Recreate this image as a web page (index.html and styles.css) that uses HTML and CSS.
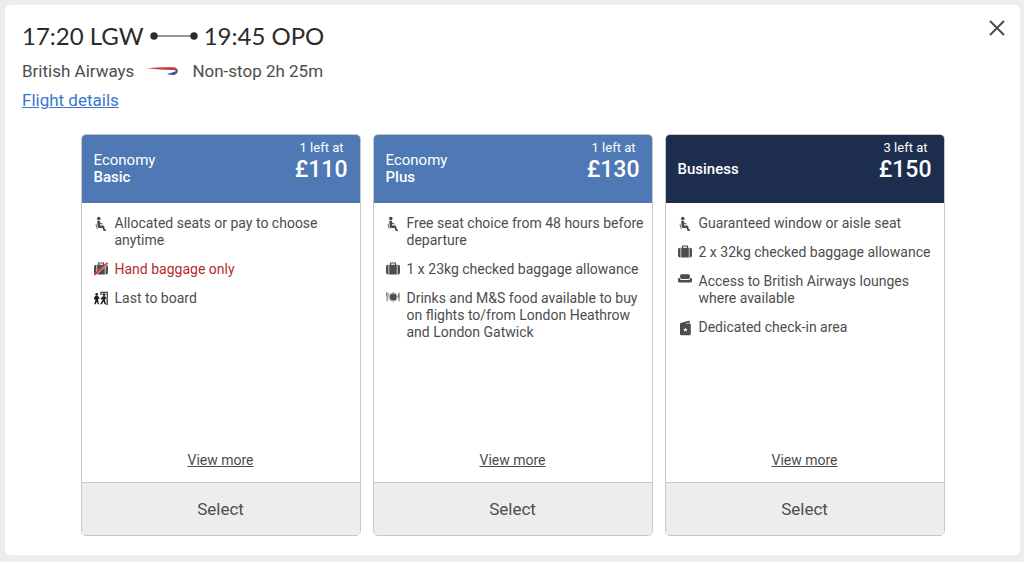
FILE: index.html
```html
<!DOCTYPE html>
<html lang="en">
<head>
<meta charset="utf-8">
<meta name="viewport" content="width=device-width, initial-scale=1">
<title>Flight fares</title>
<link rel="stylesheet" href="styles.css">
</head>
<body>
<svg class="sprite" aria-hidden="true">
  <symbol id="seat" viewBox="0 0 14 16"><circle cx="4.8" cy="2.6" r="1.8"/><path d="M3.2 6Q3.2 4.7 4.7 4.7T6.2 6V9.4H8.8Q10 9.4 10.3 10.7L10.9 13.6H12V15.1H9.6L8.6 12H5.5Q3.8 12 3.6 10.4Z"/><path d="M5.5 7.2L8.6 8" stroke="currentColor"/><path d="M2 7.8L2.6 11.4Q2.8 12.4 3.8 12.5" fill="none" stroke="currentColor" stroke-width=".8"/></symbol>
  <symbol id="case" viewBox="0 0 14 16"><path d="M4.5 3.3V1H9.5V3.3" fill="none" stroke="currentColor" stroke-width="1.1"/><path d="M2 2.8H2.5V12.5H2Q0 12.5 0 10.5V4.8Q0 2.8 2 2.8ZM3.2 2.8H10.8V12.5H3.2ZM11.5 2.8H12Q14 2.8 14 4.8V10.5Q14 12.5 12 12.5H11.5Z"/></symbol>
  <symbol id="nocase" viewBox="0 0 14 16"><use href="#case" width="14" height="16"/><path d="M.9 12.8L13.8 1" stroke="#fff" stroke-width="2"/><path d="M.5 12.8L13.5 .8" stroke="#d12f2c" stroke-width="1.7"/></symbol>
  <symbol id="board" viewBox="0 0 14 16"><g color="#1c1c1c" fill="#1c1c1c"><path d="M7 4V1.2H13.2V13.2H12" fill="none" stroke="currentColor" stroke-width="1.1"/><circle cx="2.7" cy="3.4" r="1.4"/><path d="M1.4 5.1H4L5.6 7.4L5 8.2L4.1 7.7V9.2L5 13.3H3.6L2.8 10.4L1.7 13.3H.3L1.4 9V8.2L.1 8.6V6.5Z"/><circle cx="10" cy="3.6" r="1.4"/><path d="M8.7 5.3H11.2L12.4 7.7L11.6 8.2L11 7.6V9.2L12.1 13.3H10.6L9.6 10.3L7.8 13.3H6.1L8.4 9.3V7.4L7.2 8.7L6.5 7.8Z"/></g></symbol>
  <symbol id="meal" viewBox="0 0 14 16"><circle cx="7.2" cy="6" r="3.5"/><circle cx="7.2" cy="6" r="4.3" fill="none" stroke="currentColor" stroke-width=".4"/><path d="M.5 1.5V4.3Q.5 5 1.2 5V10.3M2 1.5V4.3Q2 5 1.3 5" fill="none" stroke="currentColor" stroke-width=".8"/><path d="M13.5 1.2V10.3H12.7V6.5H12.2Q12 2 13.5 1.2Z"/></symbol>
  <symbol id="sofa" viewBox="0 0 14 16"><path d="M2 3.3V2Q2 .3 3.5 .3H10.5Q12 .3 12 2V3.3Q11 3.7 11 5.1H3Q3 3.7 2 3.3ZM0 5.3Q0 4 1.3 4T2.4 5.3V5.9H11.6V5.3Q11.6 4 12.7 4T14 5.3V7.3Q14 8.4 12.7 8.4H1.3Q0 8.4 0 7.3Z"/></symbol>
  <symbol id="pass" viewBox="0 0 14 16"><path d="M2.5 3L10.7 .7Q11.7 .5 11.7 1.5V3.7H12Q12.8 3.7 12.8 4.5V14Q12.8 15.2 11.6 15.2H3.2Q2 15.2 2 14V4Q2 3.3 2.5 3ZM7 3.7H10.8V2.8Z" fill-rule="evenodd"/><path d="M7.4 7.4L8 9H9.8L8.4 10L8.9 11.7L7.4 10.7L5.9 11.7L6.4 10L5 9H6.8Z" fill="#fff"/></symbol>
</svg>
<main class="panel">
  <header class="flight">
    <div class="flight-info">
      <h1 class="route"><span>17:20 LGW</span>
        <svg class="route-line" viewBox="0 0 48 8" aria-hidden="true"><path d="M4 4H44" stroke="#2b2b2b"/><circle cx="4" cy="4" r="3.7"/><circle cx="44" cy="4" r="3.7"/></svg>
        <span>19:45 OPO</span></h1>
      <p class="airline"><span>British Airways</span>
        <svg class="ribbon" viewBox="0 0 32 12" aria-hidden="true"><path d="M0 3.3Q15 1.8 26 2.3Q31 2.5 30.8 6.5L29 6Q28.5 5 26 5Q13 5 0 3.3Z" fill="#cf3434"/><path d="M20 8.8Q25 8 30.8 5.6Q31 9 27 10Q23.5 10.4 20 8.8Z" fill="#3158a6"/></svg>
        <span>Non-stop 2h 25m</span></p>
      <a class="details" href="#">Flight details</a>
    </div>
    <button class="close" type="button" aria-label="Close"><svg viewBox="0 0 16 16"><path d="M1 1L15 15M15 1L1 15" stroke="currentColor" stroke-width="2"/></svg></button>
  </header>
  <section class="fares">
    <article class="fare">
      <header class="fare-head"><h2 class="fare-name"><span>Economy</span><strong>Basic</strong></h2><p class="fare-price"><span class="left">1 left at</span><span class="amount">£110</span></p></header>
      <ul class="perks">
        <li><svg class="icon"><use href="#seat"/></svg><span>Allocated seats or pay to choose anytime</span></li>
        <li><svg class="icon"><use href="#nocase"/></svg><span class="warn">Hand baggage only</span></li>
        <li><svg class="icon"><use href="#board"/></svg><span>Last to board</span></li>
      </ul>
      <a class="more" href="#">View more</a>
      <button class="select" type="button">Select</button>
    </article>
    <article class="fare">
      <header class="fare-head"><h2 class="fare-name"><span>Economy</span><strong>Plus</strong></h2><p class="fare-price"><span class="left">1 left at</span><span class="amount">£130</span></p></header>
      <ul class="perks">
        <li><svg class="icon"><use href="#seat"/></svg><span>Free seat choice from 48 hours before departure</span></li>
        <li><svg class="icon"><use href="#case"/></svg><span>1 x 23kg checked baggage allowance</span></li>
        <li><svg class="icon"><use href="#meal"/></svg><span>Drinks and M&amp;S food available to buy on flights to/from London Heathrow and London Gatwick</span></li>
      </ul>
      <a class="more" href="#">View more</a>
      <button class="select" type="button">Select</button>
    </article>
    <article class="fare">
      <header class="fare-head business"><h2 class="fare-name"><strong>Business</strong></h2><p class="fare-price"><span class="left">3 left at</span><span class="amount">£150</span></p></header>
      <ul class="perks">
        <li><svg class="icon"><use href="#seat"/></svg><span>Guaranteed window or aisle seat</span></li>
        <li><svg class="icon"><use href="#case"/></svg><span>2 x 32kg checked baggage allowance</span></li>
        <li><svg class="icon"><use href="#sofa"/></svg><span>Access to British Airways lounges where available</span></li>
        <li><svg class="icon"><use href="#pass"/></svg><span>Dedicated check-in area</span></li>
      </ul>
      <a class="more" href="#">View more</a>
      <button class="select" type="button">Select</button>
    </article>
  </section>
</main>
</body>
</html>
```
FILE: styles.css
```css
* { box-sizing: border-box; }
body {
  margin: 0;
  padding: 5px 4px 7px 5px;
  min-height: 100vh;
  display: flex;
  background: #ededed;
  color: #4d4d4d;
  font-family: Roboto, sans-serif;
  font-size: 14px;
  line-height: 17px;
}
h1, h2, p, ul { margin: 0; padding: 0; font-weight: 400; }
button { font: inherit; color: inherit; cursor: pointer; }
.sprite { position: absolute; width: 0; height: 0; }
.panel {
  flex: 1;
  padding: 15px 17px 19px;
  background: #fff;
  border-radius: 5px;
}
.flight { display: flex; justify-content: space-between; align-items: flex-start; }
.flight-info { display: flex; flex-direction: column; align-items: flex-start; }
.route {
  display: flex;
  align-items: center;
  gap: 6px;
  color: #2b2b2b;
  font-family: Lato, sans-serif;
  font-size: 24px;
  line-height: 32px;
}
.route-line { width: 48px; height: 8px; fill: #2b2b2b; }
.airline {
  display: flex;
  align-items: center;
  gap: 13px;
  margin-top: 8px;
  font-size: 17px;
  line-height: 22px;
}
.ribbon { width: 32px; height: 12px; }
.details {
  margin-top: 7px;
  color: #3a76cc;
  font-size: 17px;
  line-height: 22px;
}
.close {
  display: flex;
  margin-right: -2px;
  padding: 0;
  border: 0;
  background: none;
}
.close svg { width: 16px; height: 16px; }
.fares {
  display: grid;
  grid-template-columns: repeat(3, 1fr);
  gap: 12px;
  max-width: 864px;
  margin: 23px auto 0;
}
.fare {
  display: flex;
  flex-direction: column;
  min-height: 402px;
  overflow: hidden;
  border: 1px solid #c8c8c8;
  border-radius: 5px;
}
.fare-head {
  display: flex;
  justify-content: space-between;
  align-items: center;
  min-height: 68px;
  padding: 0 12px;
  background: #4e79b4;
  color: #fff;
}
.business { background: #1d2d4d; }
.fare-name {
  display: flex;
  flex-direction: column;
  font-size: 15px;
}
.fare-name strong { font-weight: 500; }
.fare-price {
  display: flex;
  flex-direction: column;
  align-self: flex-start;
  padding-top: 4px;
}
.left { padding-right: 4px; font-size: 13px; text-align: right; }
.amount { font-size: 23px; font-weight: 500; line-height: 28px; }
.perks {
  display: flex;
  flex-direction: column;
  gap: 12px;
  flex: 1;
  padding: 12px 8px 12px 12px;
  list-style: none;
}
.perks li { display: flex; align-items: flex-start; gap: 7px; }
.icon { flex: none; width: 14px; height: 16px; margin-top: 1px; fill: currentColor; }
.warn { color: #b82a2a; }
.more {
  align-self: center;
  margin-bottom: 12px;
  color: inherit;
  line-height: 19px;
}
.select {
  height: 53px;
  border: 0;
  border-top: 1px solid #c8c8c8;
  background: #ededed;
  font-size: 17px;
}
```
